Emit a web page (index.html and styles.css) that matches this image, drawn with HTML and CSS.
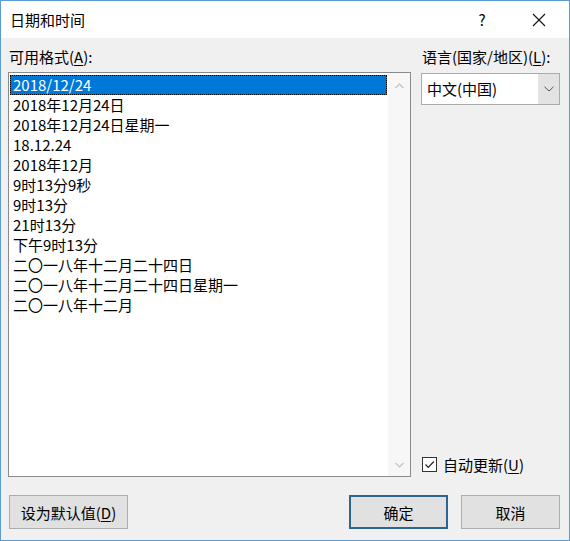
FILE: index.html
```html
<!DOCTYPE html>
<html lang="zh-CN">
<head>
    <meta charset="UTF-8">
    <meta name="viewport" content="width=device-width, initial-scale=1.0">
    <title>日期和时间</title>
    <link rel="stylesheet" href="styles.css">
</head>
<body>
    <div class="dialog">
        <div class="titlebar">
            <span class="title">日期和时间</span>
            <span class="help">?</span>
            <span class="close">
                <svg width="14" height="14" viewBox="0 0 14 14">
                    <path d="M1 1 L13 13 M13 1 L1 13" stroke="#111" stroke-width="1.1" fill="none"/>
                </svg>
            </span>
        </div>
        <div class="content">
            <div class="main">
                <div class="left">
                    <div class="label">可用格式(<u>A</u>):</div>
                    <div class="listbox">
                        <div class="items">
                            <div class="item selected">2018/12/24</div>
                            <div class="item">2018年12月24日</div>
                            <div class="item">2018年12月24日星期一</div>
                            <div class="item">18.12.24</div>
                            <div class="item">2018年12月</div>
                            <div class="item">9时13分9秒</div>
                            <div class="item">9时13分</div>
                            <div class="item">21时13分</div>
                            <div class="item">下午9时13分</div>
                            <div class="item">二〇一八年十二月二十四日</div>
                            <div class="item">二〇一八年十二月二十四日星期一</div>
                            <div class="item">二〇一八年十二月</div>
                        </div>
                        <div class="scrollbar">
                            <svg width="9" height="6" viewBox="0 0 9 6">
                                <path d="M0.5 5 L4.5 1 L8.5 5" stroke="#c2c2c2" stroke-width="1.2" fill="none"/>
                            </svg>
                            <svg width="9" height="6" viewBox="0 0 9 6">
                                <path d="M0.5 1 L4.5 5 L8.5 1" stroke="#c2c2c2" stroke-width="1.2" fill="none"/>
                            </svg>
                        </div>
                    </div>
                </div>
                <div class="right">
                    <div class="label">语言(国家/地区)(<u>L</u>):</div>
                    <div class="combo">
                        <span class="combo-text">中文(中国)</span>
                        <span class="combo-btn">
                            <svg width="10" height="6" viewBox="0 0 10 6">
                                <path d="M0.5 0.8 L5 5 L9.5 0.8" stroke="#555" stroke-width="1" fill="none"/>
                            </svg>
                        </span>
                    </div>
                    <div class="autoupdate">
                        <span class="checkbox">
                            <svg width="13" height="13" viewBox="0 0 13 13">
                                <path d="M2.5 6.5 L5.3 9.3 L10.8 3.5" stroke="#222" stroke-width="1.2" fill="none"/>
                            </svg>
                        </span>
                        <span>自动更新(<u>U</u>)</span>
                    </div>
                </div>
            </div>
            <div class="buttons">
                <button class="btn wide">设为默认值(<u>D</u>)</button>
                <div class="btn-group">
                    <button class="btn default">确定</button>
                    <button class="btn">取消</button>
                </div>
            </div>
        </div>
    </div>
</body>
</html>
```

FILE: styles.css
```css
*{
    box-sizing: border-box;
}
body{
    margin: 0;
    font-family: "Noto Sans CJK SC", "Microsoft YaHei", sans-serif;
    font-size: 15px;
    color: #000;
    background: #fff;
}
u{
    text-decoration-thickness: 1px;
    text-underline-offset: 2px;
}
.dialog{
    width: 570px;
    height: 541px;
    display: flex;
    flex-direction: column;
    background: #f0f0f0;
    border: 1px solid #5c9bd1;
}
.titlebar{
    height: 37px;
    background: #fff;
    display: flex;
    align-items: center;
    padding-left: 9px;
    flex-shrink: 0;
}
.title{
    flex: 1;
    line-height: 20px;
}
.help{
    width: 14px;
    margin-right: 43px;
    text-align: center;
    font-size: 15px;
}
.close{
    width: 14px;
    height: 14px;
    margin-right: 23px;
    display: flex;
}
.content{
    flex: 1;
    display: flex;
    flex-direction: column;
    padding: 9px 9px 0 7px;
}
.main{
    display: flex;
    gap: 10px;
}
.label{
    line-height: 20px;
    height: 20px;
    margin-bottom: 5px;
    padding-left: 1px;
}
.left{
    width: 403px;
}
.listbox{
    height: 405px;
    background: #fff;
    border: 1px solid #8a8a8a;
    display: flex;
}
.items{
    flex: 1;
    padding: 2px 1px;
}
.item{
    height: 20px;
    line-height: 20px;
    padding-left: 3px;
    white-space: nowrap;
}
.item.selected{
    background: #0078d7;
    color: #fff;
    outline: 1px dotted #000;
    outline-offset: -1px;
}
.scrollbar{
    width: 22px;
    background: #f7f7f7;
    display: flex;
    flex-direction: column;
    align-items: center;
    justify-content: space-between;
    padding: 10px 0 8px;
}
.right{
    width: 139px;
    display: flex;
    flex-direction: column;
}
.right .label{
    margin-bottom: 6px;
}
.combo{
    height: 32px;
    background: #fff;
    border: 1px solid #ababab;
    display: flex;
    align-items: stretch;
}
.combo-text{
    flex: 1;
    line-height: 30px;
    padding-left: 5px;
}
.combo-btn{
    width: 21px;
    background: #e3e3e3;
    display: flex;
    align-items: center;
    justify-content: center;
}
.autoupdate{
    margin-top: auto;
    margin-bottom: 3px;
    display: flex;
    align-items: center;
    gap: 6px;
    height: 20px;
    padding-left: 1px;
}
.checkbox{
    width: 15px;
    height: 15px;
    border: 1px solid #333;
    background: #fff;
    display: flex;
    align-items: center;
    justify-content: center;
}
.buttons{
    margin-top: 18px;
    display: flex;
    justify-content: space-between;
    padding-left: 1px;
}
.btn-group{
    display: flex;
    gap: 13px;
    padding-right: 0;
}
.btn{
    font-family: inherit;
    font-size: 15px;
    height: 34px;
    width: 99px;
    background: #e1e1e1;
    border: 1px solid #adadad;
    color: #000;
    padding: 0;
    margin: 0;
}
.btn.wide{
    width: 119px;
}
.btn.default{
    border: 2px solid #2d6491;
    width: 99px;
}
```
